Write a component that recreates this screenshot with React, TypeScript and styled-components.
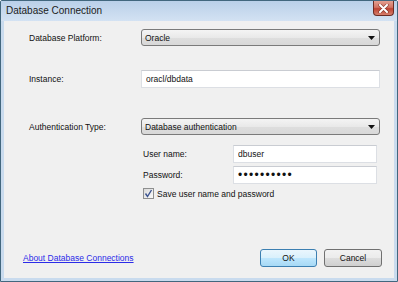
import React from "react";
import styled, { createGlobalStyle } from "styled-components";

const GlobalStyle = createGlobalStyle`
  html, body {
    margin: 0;
    padding: 0;
    background: #ffffff;
  }
  body {
    font-family: "Liberation Sans", Arial, sans-serif;
  }
`;

const Window = styled.div`
  width: 398px;
  height: 282px;
  box-sizing: border-box;
  border: 1px solid #42677e;
  border-radius: 2px 2px 0 0;
  background: #c9dbee;
  display: flex;
  flex-direction: column;
`;

const TitleBar = styled.div`
  height: 20px;
  flex-shrink: 0;
  display: flex;
  align-items: flex-start;
  justify-content: space-between;
  background: linear-gradient(#bad0e9, #d3e2f3);
`;

const Title = styled.span`
  font-size: 10px;
  color: #1b1b1b;
  padding: 4px 0 0 5px;
`;

const CloseButton = styled.div`
  width: 21px;
  height: 15px;
  box-sizing: border-box;
  margin-right: 3px;
  border: 1px solid #6b2c24;
  border-top: none;
  border-radius: 0 0 4px 4px;
  background: linear-gradient(#e3a092, #d27363 45%, #bd4231 55%, #d6806d);
  display: flex;
  align-items: center;
  justify-content: center;
`;

const Client = styled.div`
  flex: 1;
  margin: 0 3px 3px;
  background: #f0f0f0;
  box-sizing: border-box;
  padding: 8px 14px 11px 25px;
  display: flex;
  flex-direction: column;
  font-size: 8.5px;
  color: #111;
`;

const Row = styled.div<{ $gap: number }>`
  display: grid;
  grid-template-columns: 112px 1fr;
  align-items: center;
  margin-top: ${(p) => p.$gap}px;
`;

const Label = styled.span`
  white-space: nowrap;
`;

const Combo = styled.div`
  height: 17px;
  box-sizing: border-box;
  border: 1px solid #7a7a7a;
  border-radius: 3px;
  background: linear-gradient(#f4f4f4, #e9e9e9 50%, #dedede 51%, #d8d8d8);
  display: flex;
  align-items: center;
  justify-content: space-between;
  padding: 0 4px 0 3px;
`;

const Field = styled.input`
  height: 18px;
  box-sizing: border-box;
  width: 100%;
  margin: 0;
  border: 1px solid #dcdfe4;
  border-top-color: #c9ccd2;
  background: #ffffff;
  padding: 0 4px;
  font-family: "Liberation Sans", Arial, sans-serif;
  font-size: 8.5px;
  color: #111;
  outline: none;
`;

const Secret = styled.div`
  height: 18px;
  box-sizing: border-box;
  border: 1px solid #dcdfe4;
  border-top-color: #c9ccd2;
  background: #ffffff;
  padding: 0 4px;
  display: flex;
  align-items: center;
  font-size: 12px;
  letter-spacing: 1.3px;
  color: #111;
`;

const Credentials = styled.div`
  margin: 10px 3px 0 114px;
  display: grid;
  grid-template-columns: 90px 1fr;
  row-gap: 3px;
  align-items: center;
`;

const CheckRow = styled.div`
  grid-column: 1 / span 2;
  display: flex;
  align-items: center;
  gap: 3px;
  margin-top: 1px;
`;

const Box = styled.div`
  width: 11px;
  height: 11px;
  box-sizing: border-box;
  border: 1px solid #8e8f8f;
  background: linear-gradient(135deg, #dadada, #fafafa);
  display: flex;
  align-items: center;
  justify-content: center;
`;

const Footer = styled.div`
  margin: auto -2px 0 -6px;
  display: flex;
  align-items: center;
  gap: 7px;
`;

const HelpLink = styled.a`
  color: #2b2be8;
  text-decoration: underline;
  margin-right: auto;
  cursor: pointer;
`;

const Button = styled.div<{ $primary?: boolean }>`
  width: ${(p) => (p.$primary ? 57 : 58)}px;
  height: 18px;
  box-sizing: border-box;
  border: 1px solid ${(p) => (p.$primary ? "#3c7fb1" : "#707070")};
  border-radius: 3px;
  background: ${(p) =>
    p.$primary
      ? "linear-gradient(#eaf6fd, #d9f0fc 50%, #bee6fd 51%, #a7d9f5)"
      : "linear-gradient(#f2f2f2, #ebebeb 50%, #dddddd 51%, #cfcfcf)"};
  display: flex;
  align-items: center;
  justify-content: center;
  color: #111;
`;

const Arrow = () => (
  <svg width="7" height="4" viewBox="0 0 7 4">
    <polygon points="0,0 7,0 3.5,4" fill="#111" />
  </svg>
);

export default function App() {
  return (
    <>
      <GlobalStyle />
      <Window>
        <TitleBar>
          <Title>Database Connection</Title>
          <CloseButton>
            <svg width="13" height="9" viewBox="0 0 13 9">
              <path d="M3 1 L10 8 M10 1 L3 8" stroke="#5b1c14" strokeWidth="3.4" strokeLinecap="round" opacity="0.55" />
              <path d="M3 1 L10 8 M10 1 L3 8" stroke="#ffffff" strokeWidth="2" strokeLinecap="round" />
            </svg>
          </CloseButton>
        </TitleBar>
        <Client>
          <Row $gap={0}>
            <Label>Database Platform:</Label>
            <Combo>
              <span>Oracle</span>
              <Arrow />
            </Combo>
          </Row>
          <Row $gap={24}>
            <Label>Instance:</Label>
            <Field readOnly value="oracl/dbdata" />
          </Row>
          <Row $gap={30}>
            <Label>Authentication Type:</Label>
            <Combo>
              <span>Database authentication</span>
              <Arrow />
            </Combo>
          </Row>
          <Credentials>
            <Label>User name:</Label>
            <Field readOnly value="dbuser" />
            <Label>Password:</Label>
            <Secret>••••••••••</Secret>
            <CheckRow>
              <Box>
                <svg width="9" height="9" viewBox="0 0 9 9">
                  <path d="M1.5 4.5 L3.5 7.5 L7.5 1" stroke="#3b5390" strokeWidth="1.4" fill="none" />
                </svg>
              </Box>
              <Label>Save user name and password</Label>
            </CheckRow>
          </Credentials>
          <Footer>
            <HelpLink>About Database Connections</HelpLink>
            <Button $primary>OK</Button>
            <Button>Cancel</Button>
          </Footer>
        </Client>
      </Window>
    </>
  );
}
